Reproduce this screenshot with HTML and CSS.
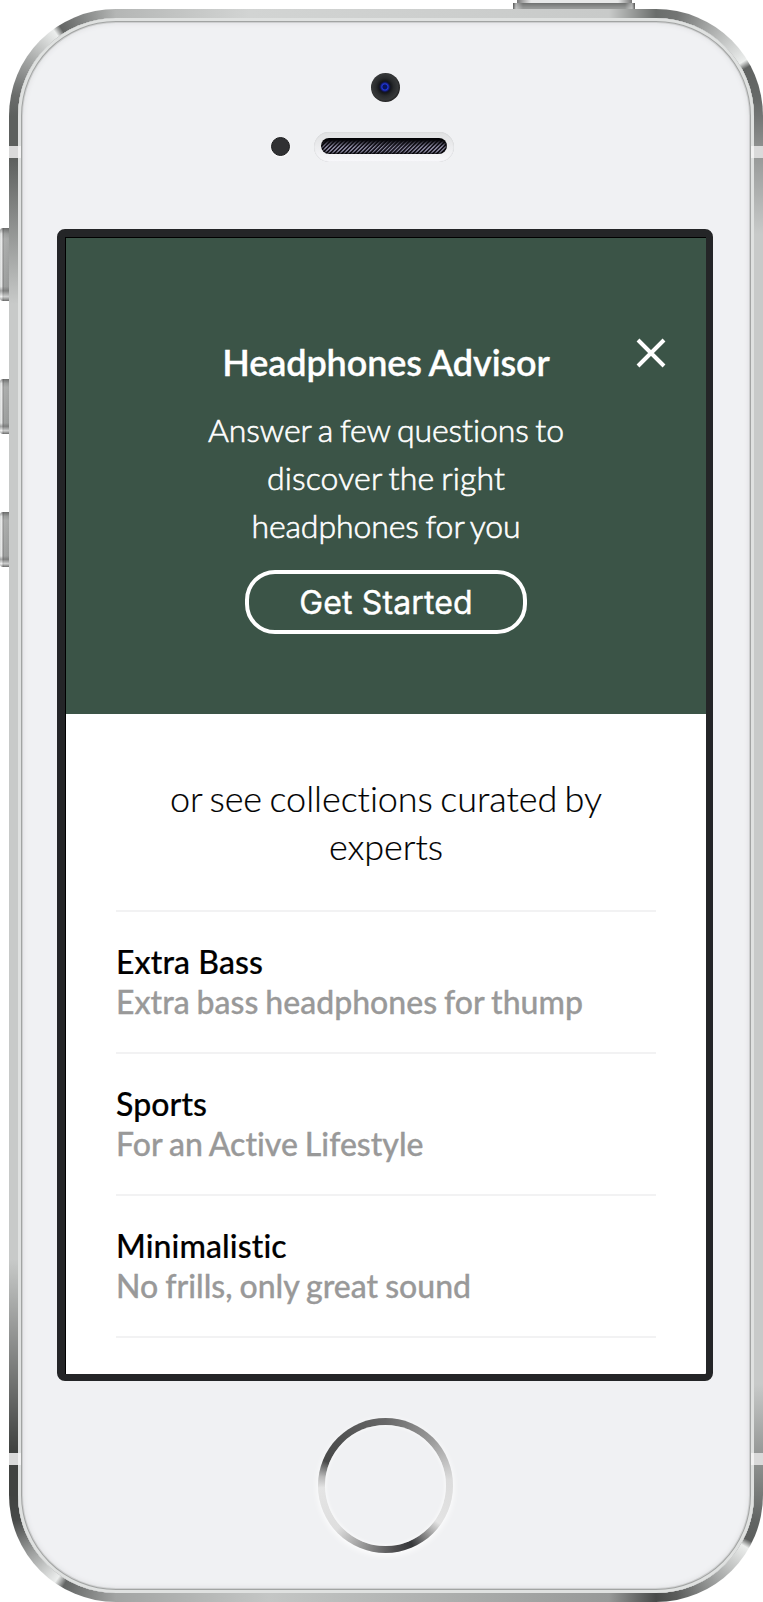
FILE: index.html
```html
<!DOCTYPE html>
<html lang="en">
<head>
<meta charset="utf-8">
<title>Headphones Advisor</title>
<link rel="stylesheet" href="styles.css">
</head>
<body>
<div class="device">
  <span class="key key-power"></span>
  <span class="key key-mute"></span>
  <span class="key key-up"></span>
  <span class="key key-down"></span>
  <div class="face">
    <div class="camera-row"><span class="camera"></span></div>
    <div class="speaker-row">
      <span class="sensor"></span>
      <span class="speaker"><span class="grille"></span></span>
    </div>
    <main class="screen">
      <section class="advisor">
        <svg class="close" viewBox="0 0 30 30" role="img" aria-label="Close"><path d="M2 2 28 28M28 2 2 28"/></svg>
        <h1 class="title">Headphones Advisor</h1>
        <p class="lead">Answer a few questions to<br><span class="loose">discover the right</span><br>headphones for you</p>
        <button class="start">Get Started</button>
      </section>
      <section class="collections">
        <h2 class="intro">or see collections curated by<br>experts</h2>
        <ul class="list">
          <li class="item"><strong class="name">Extra Bass</strong><span class="note">Extra bass headphones for thump</span></li>
          <li class="item"><strong class="name">Sports</strong><span class="note">For an Active Lifestyle</span></li>
          <li class="item"><strong class="name">Minimalistic</strong><span class="note">No frills, only great sound</span></li>
        </ul>
      </section>
    </main>
    <div class="home"></div>
  </div>
  <span class="antenna antenna-tl"></span>
  <span class="antenna antenna-tr"></span>
  <span class="antenna antenna-bl"></span>
  <span class="antenna antenna-br"></span>
</div>
</body>
</html>
```
FILE: styles.css
```css
* { box-sizing: border-box; }
body {
  margin: 0;
  padding: 9px 0 0 9px;
  background: #fff;
  font-family: Lato, "Open Sans", sans-serif;
  font-variant-ligatures: none;
  overflow: hidden;
}

/* Brushed metal chassis: four conic corners joined by linear edges */
.device {
  position: relative;
  width: 754px;
  height: 1593px;
  padding: 9px;
  border-radius: 107px;
  background:
    conic-gradient(from 270deg at 100% 100%, #5d605e 0deg, #6b6d6c 12deg, #a3a5a4 32deg, #eceeed 54deg, #636564 58deg, #8e908f 75deg, #b4b6b5 90deg) 0 0 / 107px 107px no-repeat,
    conic-gradient(from 0deg at 0 100%, #6a6d6b 0deg, #737574 12deg, #a9abaa 32deg, #eceeed 58deg, #606261 62deg, #666968 80deg, #737574 90deg) 100% 0 / 107px 107px no-repeat,
    conic-gradient(from 90deg at 0 0, #777a78 0deg, #616463 15deg, #5c5e5d 26deg, #eceeed 30deg, #a9abaa 52deg, #5b5d5c 78deg, #484a49 90deg) 100% 100% / 107px 107px no-repeat,
    conic-gradient(from 180deg at 100% 0, #a2a4a3 0deg, #636564 30deg, #eceeed 35deg, #9b9d9c 56deg, #484a49 76deg, #414341 90deg) 0 100% / 107px 107px no-repeat,
    linear-gradient(90deg, #b4b6b5 107px, #d2d4d3 240px, #c8cac9 600px, #6a6d6b 647px) 0 0 / 100% 9px no-repeat,
    linear-gradient(90deg, #a2a4a3 107px, #c4c6c5 260px, #979998 600px, #484a49 647px) 0 100% / 100% 9px no-repeat,
    linear-gradient(180deg, #5d605e 150px, #c8cac9 295px, #c8cac9 1250px, #414341 1440px) 0 0 / 9px 100% no-repeat,
    linear-gradient(180deg, #737574 107px, #999b9a 150px, #c8cac9 225px, #c8cac9 1375px, #777a78 1486px) 100% 0 / 9px 100% no-repeat,
    #d8dad9;
}
.face {
  display: flex;
  flex-direction: column;
  align-items: center;
  height: 100%;
  padding: 54px 2px 0 0;
  border-radius: 98px;
  background: #f0f1f3;
  box-shadow: inset 0 0 0 3px #dfe1e0, inset 0 0 0 4px #a2a4a3, inset 0 0 0 5px #cfd0d1, inset 0 0 4px 6px #e2e3e5;
}

/* Top sensors */
.camera-row { display: flex; height: 30px; padding-top: 1px; }
.camera {
  width: 29px;
  height: 29px;
  border-radius: 50%;
  background: radial-gradient(circle at 48% 48%, #07155e 0 2px, #2137dc 3px, #10123b 5px, #15171a 6px, #292b2d 9px, #363839 13px, #222 15px);
}
.speaker-row {
  display: flex;
  align-items: center;
  gap: 24px;
  height: 30px;
  margin: 30px 0 0;
  padding-right: 45px;
}
.sensor { width: 19px; height: 19px; margin-bottom: 1px; border-radius: 50%; background: #303133; border: 1px solid #1e1f20; box-shadow: 0 1px 2px #fff; }
.speaker {
  display: flex;
  padding: 6px 7px 8px;
  width: 140px;
  height: 30px;
  border-radius: 15px;
  background: linear-gradient(#e0e1e2, #f8f8fb);
  box-shadow: inset 0 0 1px #b8babb;
}
.grille {
  flex: 1;
  border-radius: 8px;
  background:
    linear-gradient(#08080d 2px, transparent 9px),
    repeating-linear-gradient(135deg, #17151f 0 1.2px, #85839a 1.5px 2.4px, #17151f 2.8px);
  box-shadow: inset 0 0 3px 1px #000;
}

/* Display */
.screen {
  width: 656px;
  height: 1152px;
  flex: none;
  margin-top: 67px;
  border: solid #242527;
  border-width: 8px 7px 7px 8px;
  border-radius: 8px;
  background: #fff;
  box-shadow: inset 1px 1px 0 #000;
  padding: 1px 0 0 1px;
}
.advisor {
  position: relative;
  display: flex;
  flex-direction: column;
  align-items: center;
  height: 476px;
  padding-top: 100px;
  background: #3b5447;
  color: #fff;
  text-align: center;
}
.close {
  position: absolute;
  top: 100px;
  right: 40px;
  width: 30px;
  height: 30px;
  fill: none;
  stroke: #fff;
  stroke-width: 4;
}
.title { margin: 0; font-size: 36px; line-height: 48px; font-weight: 600; letter-spacing: -.1px; word-spacing: -1px; white-space: nowrap; -webkit-text-stroke: .3px #fff; }
.lead { margin: 20px 0 0; font-size: 32px; line-height: 48px; font-weight: 300; letter-spacing: -.1px; word-spacing: -1.9px; white-space: nowrap; -webkit-text-stroke: .6px #fff; }
.loose { letter-spacing: .15px; }
.start {
  width: 282px;
  height: 64px;
  margin-top: 20px;
  padding: 2px 0 0;
  border: 4px solid #fff;
  border-radius: 30px;
  background: none;
  color: #fff;
  font: 400 32px/54px Inter, sans-serif;
  letter-spacing: .15px;
  -webkit-text-stroke: .4px #fff;
}
.collections { padding: 60px 50px 0; }
.intro { margin: 0; font-size: 36px; line-height: 48px; font-weight: 300; letter-spacing: -.05px; word-spacing: -2.3px; text-align: center; color: #000; white-space: nowrap; -webkit-text-stroke: .2px #000; }
.list { margin: 40px 0 0; padding: 0; list-style: none; border-top: 2px solid #f2f2f3; }
.item {
  display: flex;
  flex-direction: column;
  height: 142px;
  padding-top: 30px;
  border-bottom: 2px solid #f2f2f3;
  font-size: 32px;
  line-height: 40px;
  white-space: nowrap;
}
.name { font-weight: 500; color: #000; letter-spacing: .1px; -webkit-text-stroke: .2px #000; }
.note { font-weight: 500; color: #999; word-spacing: -1.1px; -webkit-text-stroke: .3px #999; }

/* Home button */
.home {
  position: relative;
  flex: none;
  width: 135px;
  height: 135px;
  margin-top: 37px;
  border-radius: 50%;
  background: conic-gradient(#686868, #999 45deg, #dcdcdc 85deg, #e3e3e3 125deg, #858585 142deg, #36373a 156deg, #4f4f50 172deg, #8c8c8c 196deg, #dedede 228deg, #e4e4e4 268deg, #b8b8b8 278deg, #484949 292deg, #505151 315deg, #686868);
  box-shadow: 0 2px 7px #fff;
}
.home::after {
  content: "";
  position: absolute;
  inset: 7px;
  border-radius: 50%;
  background: #f0f1f3;
  box-shadow: inset 0 0 4px #fff;
}

/* Antenna breaks and hardware keys sit on the chassis edge */
.antenna { position: absolute; width: 12px; height: 12px; background: linear-gradient(90deg, #dadada 9px, #f2f2f2 9px); }
.antenna-tl { left: 0; top: 137px; }
.antenna-tr { right: 0; top: 137px; transform: scaleX(-1); }
.antenna-bl { left: 0; top: 1444px; }
.antenna-br { right: 0; top: 1444px; transform: scaleX(-1); }
.key {
  position: absolute;
  left: -9px;
  width: 9px;
  height: 55px;
  border-radius: 3px 0 0 3px;
  background:
    linear-gradient(rgba(60,60,60,.5), transparent 8%, rgba(255,255,255,.15) 15%, transparent 80%, rgba(90,90,90,.45) 86%, rgba(255,255,255,.5) 94%, rgba(60,60,60,.5)),
    linear-gradient(90deg, #d5d7d6, #eceded 2px, #777 3px, #a0a2a1 4px, #979998 9px);
}
.key-mute { top: 219px; height: 73px; }
.key-up { top: 370px; }
.key-down { top: 503px; }
.key-power {
  left: 504px;
  top: -9px;
  width: 122px;
  height: 9px;
  border-radius: 2px 2px 0 0;
  background:
    linear-gradient(90deg, rgba(60,60,60,.6), rgba(255,255,255,.4) 3px, transparent 10px 112px, rgba(255,255,255,.4) 119px, rgba(60,60,60,.6)) 0 100% / 100% 6px no-repeat,
    linear-gradient(#6f7170, #979998 5px) 0 100% / 100% 6px no-repeat,
    linear-gradient(90deg, #777, #e7e8e8 14px 101px, #777) 50% 0 / 115px 3px no-repeat;
}
```
